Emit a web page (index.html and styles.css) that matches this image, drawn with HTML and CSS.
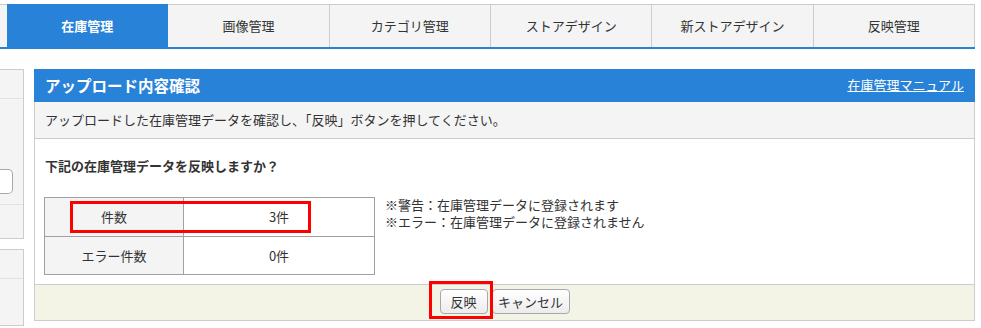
FILE: index.html
```html
<!DOCTYPE html>
<html lang="ja">
<head>
<meta charset="utf-8">
<title>アップロード内容確認</title>
<link rel="stylesheet" href="styles.css">
</head>
<body>
<nav class="tabs">
  <span class="tab-spacer"></span>
  <a class="tab active">在庫管理</a>
  <a class="tab">画像管理</a>
  <a class="tab">カテゴリ管理</a>
  <a class="tab">ストアデザイン</a>
  <a class="tab">新ストアデザイン</a>
  <a class="tab">反映管理</a>
</nav>
<div class="layout">
  <aside class="sidebar">
    <div class="side-box">
      <div class="side-row r1"></div>
      <div class="side-row r2"><div class="side-input"></div></div>
      <div class="side-row r3"></div>
    </div>
    <div class="side-box second">
      <div class="side-row r1"></div>
      <div class="side-row r4"></div>
    </div>
  </aside>
  <section class="panel">
    <header class="panel-head">
      <h1 class="panel-title">アップロード内容確認</h1>
      <a class="manual-link" href="#">在庫管理マニュアル</a>
    </header>
    <div class="panel-desc">アップロードした在庫管理データを確認し、「反映」ボタンを押してください。</div>
    <div class="panel-body">
      <p class="question">下記の在庫管理データを反映しますか？</p>
      <div class="result">
        <div class="table-wrap">
          <table class="count-table">
            <tr class="row-a"><th>件数</th><td>3件</td></tr>
            <tr class="row-b"><th>エラー件数</th><td>0件</td></tr>
          </table>
          <span class="mark mark-row"></span>
        </div>
        <div class="notes">
          <div class="note">※警告：在庫管理データに登録されます</div>
          <div class="note">※エラー：在庫管理データに登録されません</div>
        </div>
      </div>
    </div>
    <footer class="panel-foot">
      <div class="btns">
        <span class="btn-wrap">
          <button class="btn btn-apply">反映</button>
          <span class="mark mark-btn"></span>
        </span>
        <button class="btn btn-cancel">キャンセル</button>
      </div>
    </footer>
  </section>
</div>
</body>
</html>
```
FILE: styles.css
```css
* { box-sizing: border-box; }
html, body { margin: 0; padding: 0; background: #fff; }
body {
  width: 981px;
  height: 328px;
  overflow: hidden;
  font-family: "Noto Sans CJK JP", "Noto Sans", sans-serif;
  font-size: 13px;
  color: #333;
}

/* tabs */
.tabs {
  display: flex;
  margin: 4px 6px 0 0;
  height: 45px;
  border-bottom: 2px solid #2882d8;
}
.tab-spacer {
  width: 7px;
  background: #f4f4f4;
  border-top: 1px solid #ccc;
}
.tab {
  flex: 1;
  display: flex;
  align-items: center;
  justify-content: center;
  background: #f4f4f4;
  border-top: 1px solid #ccc;
  border-right: 1px solid #ccc;
  color: #333;
  font-size: 13px;
  padding-bottom: 2px;
  text-decoration: none;
}
.tab.active {
  background: #2882d8;
  border-top-color: #2882d8;
  border-right-color: #2882d8;
  color: #fff;
  font-weight: bold;
}

/* layout */
.layout {
  display: flex;
  align-items: flex-start;
  gap: 10px;
  margin-top: 20px;
  padding-right: 6px;
}
.sidebar {
  width: 24px;
  flex: none;
  display: flex;
  flex-direction: column;
  gap: 10px;
}
.side-box {
  background: #f4f4f4;
  border: 1px solid #ccc;
  border-left: none;
}
.side-row { border-bottom: 1px solid #e2e2e2; }
.side-row:last-child { border-bottom: none; }
.r1 { height: 29px; }
.r2 { height: 106px; display: flex; align-items: flex-end; padding-bottom: 10px; }
.r3 { height: 33px; }
.r4 { height: 46px; }
.side-input {
  width: 13px;
  height: 25px;
  background: #fff;
  border: 1px solid #a8a8a8;
  border-left: none;
  border-radius: 0 5px 5px 0;
}

/* panel */
.panel {
  flex: 1;
  border: 1px solid #ccc;
  border-top: none;
  height: 252px;
  display: flex;
  flex-direction: column;
}
.panel-head {
  height: 33px;
  margin: 0 -1px 0 -1px;
  background: #2882d8;
  display: flex;
  align-items: center;
  justify-content: space-between;
  padding: 0 11px 2px 11px;
}
.panel-title {
  margin: 0;
  font-size: 15.5px;
  font-weight: bold;
  color: #fff;
}
.manual-link {
  color: #fff;
  font-size: 13px;
  text-decoration: underline;
}
.panel-desc {
  height: 37px;
  background: #f4f4f4;
  border-bottom: 1px solid #ccc;
  padding: 0 10px 1px;
  display: flex;
  align-items: center;
}
.panel-body {
  flex: 1;
  padding: 17px 10px 0 10px;
}
.question {
  margin: 0;
  font-weight: bold;
  line-height: 20px;
}
.result {
  display: flex;
  align-items: flex-start;
  gap: 10px;
  margin-top: 21px;
  margin-left: -1px;
}
.table-wrap { position: relative; }
.count-table {
  border-collapse: collapse;
  width: 331px;
}
.count-table th,
.count-table td {
  border: 1px solid #a0a0a0;
  text-align: center;
  font-weight: normal;
  padding: 0 0 1px;
}
.count-table th {
  width: 139px;
  background: #f4f4f4;
}
.count-table td { background: #fff; }
.row-a th, .row-a td { height: 39px; }
.row-b th, .row-b td { height: 38px; }
.notes {
  margin-top: -1px;
}
.note {
  height: 17px;
  line-height: 17px;
}

.mark {
  position: absolute;
  border: 3px solid #f00;
  pointer-events: none;
}
.mark-row {
  left: 26px;
  top: 4px;
  width: 241px;
  height: 32px;
}

/* footer */
.panel-foot {
  height: 36px;
  background: #f4f4e6;
  border-top: 1px solid #ccc;
  display: flex;
  justify-content: center;
  padding-top: 4px;
}
.btns {
  display: flex;
  gap: 4px;
  align-items: flex-start;
}
.btn-wrap { position: relative; display: flex; }
.btn {
  height: 25px;
  padding: 0 0 1px;
  font-family: inherit;
  font-size: 13px;
  color: #333;
  background: linear-gradient(#ffffff, #ececec);
  border: 1px solid #a8a8a8;
  border-radius: 4px;
}
.btn-apply { width: 48px; }
.btn-cancel { width: 78px; }
.mark-btn {
  left: -11px;
  top: -8px;
  right: -5px;
  bottom: -5px;
}
```
